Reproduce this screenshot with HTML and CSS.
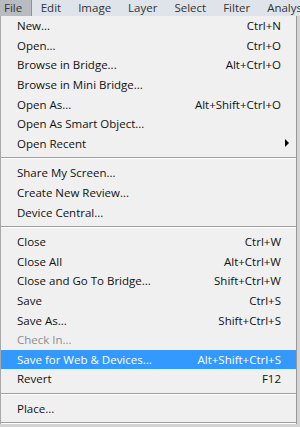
FILE: index.html
```html
<!DOCTYPE html>
<html lang="en">
<head>
    <meta charset="UTF-8">
    <meta name="viewport" content="width=device-width, initial-scale=1.0">
    <title>File Menu</title>
    <link rel="stylesheet" href="styles.css">
</head>
<body>

    <div class="menubar">
        <span class="top-item active">File</span>
        <span class="top-item">Edit</span>
        <span class="top-item">Image</span>
        <span class="top-item">Layer</span>
        <span class="top-item">Select</span>
        <span class="top-item">Filter</span>
        <span class="top-item">Analysis</span>
    </div>

    <div class="menu">
        <div class="item"><span>New...</span><span class="key">Ctrl+N</span></div>
        <div class="item"><span>Open...</span><span class="key">Ctrl+O</span></div>
        <div class="item"><span>Browse in Bridge...</span><span class="key">Alt+Ctrl+O</span></div>
        <div class="item"><span>Browse in Mini Bridge...</span></div>
        <div class="item"><span>Open As...</span><span class="key">Alt+Shift+Ctrl+O</span></div>
        <div class="item"><span>Open As Smart Object...</span></div>
        <div class="item"><span>Open Recent</span><span class="arrow"></span></div>
        <div class="separator"></div>
        <div class="item"><span>Share My Screen...</span></div>
        <div class="item"><span>Create New Review...</span></div>
        <div class="item"><span>Device Central...</span></div>
        <div class="separator"></div>
        <div class="item"><span>Close</span><span class="key">Ctrl+W</span></div>
        <div class="item"><span>Close All</span><span class="key">Alt+Ctrl+W</span></div>
        <div class="item"><span>Close and Go To Bridge...</span><span class="key">Shift+Ctrl+W</span></div>
        <div class="item"><span>Save</span><span class="key">Ctrl+S</span></div>
        <div class="item"><span>Save As...</span><span class="key">Shift+Ctrl+S</span></div>
        <div class="item disabled"><span>Check In...</span></div>
        <div class="item selected"><span>Save for Web &amp; Devices...</span><span class="key">Alt+Shift+Ctrl+S</span></div>
        <div class="item"><span>Revert</span><span class="key">F12</span></div>
        <div class="separator"></div>
        <div class="item"><span>Place...</span></div>
        <div class="separator"></div>
    </div>

</body>
</html>
```

FILE: styles.css
```css
body {
    margin: 0;
    font-family: "Open Sans", Arial, sans-serif;
    font-size: 11.5px;
    color: #111;
    background-color: #d4d4d4;
    overflow: hidden;
}
.menubar {
    height: 16px;
    display: flex;
    align-items: center;
    background-color: #dfe4ea;
    white-space: nowrap;
    overflow: hidden;
}
.top-item {
    padding: 0 8.5px;
    color: #333;
    line-height: 16px;
    font-size: 11.5px;
}
.top-item.active {
    background-color: #b8bcc0;
    border-right: 1px solid #8d9196;
    padding: 0 9px 0 4px;
}
.menu {
    width: 295px;
    background-color: #f0f0f0;
    border-left: 1px solid #a8a8a8;
    border-right: 1px solid #979797;
}
.item {
    height: 19.6px;
    display: flex;
    align-items: center;
    justify-content: space-between;
    padding: 0 15px 0 16px;
}
.disabled {
    color: #8d8d8d;
}
.selected {
    background-color: #3399ff;
    color: #fff;
}
.arrow {
    width: 0;
    height: 0;
    border-top: 4px solid transparent;
    border-bottom: 4px solid transparent;
    border-left: 4px solid #000;
    margin-right: -8px;
}
.separator {
    height: 1px;
    margin: 4px 0;
    background-color: #a0a0a0;
    border-bottom: 1px solid #fff;
}
```
